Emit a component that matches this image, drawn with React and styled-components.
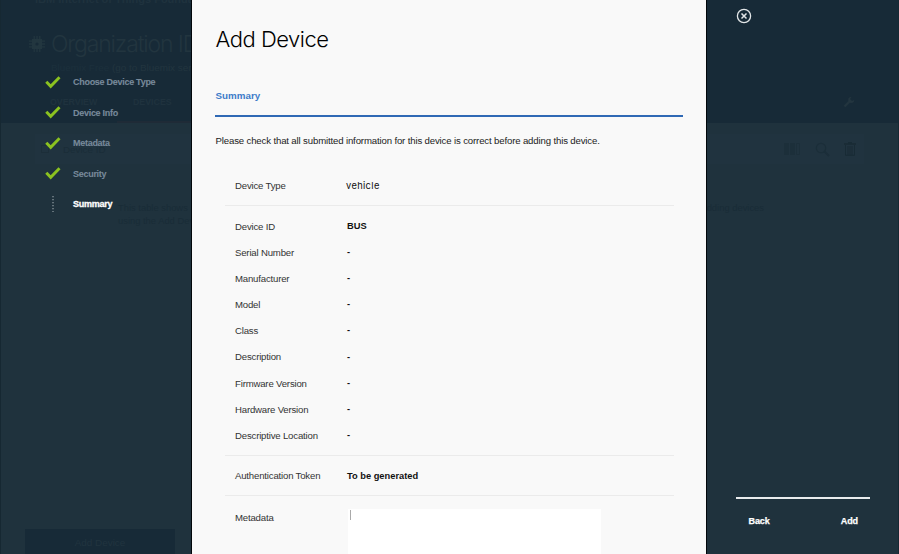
import React from 'react';
import styled, { createGlobalStyle } from 'styled-components';

const Global = createGlobalStyle`
  * { box-sizing: border-box; }
  body { margin: 0; overflow: hidden; background: #1f323d; font-family: "Liberation Sans", Arial, sans-serif; }
  h1, h2, p, ul, dl, dt, dd { margin: 0; padding: 0; font-weight: normal; }
  button { border: 0; padding: 0; background: none; font-family: inherit; cursor: pointer; }
`;

const Stage = styled.div`
  display: grid;
  grid-template: 554px / 899px;
  width: 899px;
  height: 554px;
  overflow: hidden;
`;

/* Dimmed page under the dialog */
const Backdrop = styled.div`
  grid-area: 1 / 1;
  display: grid;
  grid-template-rows: 123px 1fr;
  min-width: 0;
  overflow: hidden;
  white-space: nowrap;
  border-right: 1px solid #172833;
`;
const PageHeader = styled.header`
  background: #172a37;
  color: #203440;
  overflow: hidden;
`;
const Product = styled.div`
  height: 28px;
  padding-left: 35px;
  margin-top: -7px;
  font-size: 11px;
  line-height: 12px;
  font-weight: bold;
  color: #1f323e;
`;
const OrgTitle = styled.div`
  display: flex;
  align-items: center;
  gap: 6px;
  height: 46px;
  padding-left: 29px;
  font: 300 23px Inter, sans-serif;
  letter-spacing: -1.15px;
  color: #22353f;
`;
const Plan = styled.div`
  padding-left: 51px;
  height: 25px;
  font-size: 9.9px;
  line-height: 1px;
  color: #1c303c;
  b { color: #22353f; font-weight: normal; }
`;
const PageTabs = styled.div`
  display: grid;
  grid-template-columns: 67px 1fr auto;
  align-items: center;
  height: 29px;
  padding: 0 43px 10px 50px;
  font-size: 8.8px;
  font-weight: bold;
  color: #1f323e;
  span + span { padding-left: 16px; }
`;
const ActiveTabLine = styled.div`
  width: 74px;
  height: 2px;
  margin-left: 117px;
  background: #1f2b37;
`;
const PageBody = styled.div`
  display: flex;
  flex-direction: column;
  background: #1f323d;
`;
const TableBar = styled.div`
  display: flex;
  align-items: center;
  gap: 14px;
  height: 30px;
  margin: 11px 34px 0 35px;
  padding: 0 8px 0 6px;
  background: #20333f;
  color: #1a2d38;
  font-size: 9.8px;
`;
const Box = styled.span`
  width: 8px;
  height: 8px;
  border: 1px solid #1c2e39;
`;
const Spacer = styled.span`flex: 1;`;
const Empty = styled.div`
  display: flex;
  justify-content: space-between;
  padding: 37px 134px 0 118px;
  color: #192c37;
  font-size: 9.4px;
  line-height: 13px;
`;
const PageAction = styled.div`
  width: 150px;
  height: 25px;
  margin: auto 0 0 25px;
  background: #172a37;
  color: #21343f;
  font-size: 9.9px;
  line-height: 28px;
  text-align: center;
`;

/* Dialog */
const Wizard = styled.div`
  grid-area: 1 / 1;
  z-index: 1;
  display: grid;
  grid-template-columns: 191px 516px 1fr;
  height: 554px;
`;
const Steps = styled.ul`
  list-style: none;
  padding: 66.6px 0 0 45px;
  border-left: 1px solid #162832;
`;
const Step = styled.li`
  display: grid;
  grid-template-columns: 28px 1fr;
  align-items: center;
  height: 30.5px;
  color: ${p => (p.$active ? '#fff' : '#77899a')};
  font-size: 9px;
  font-weight: bold;
  letter-spacing: ${p => (p.$active ? '-0.25px' : '-0.28px')};
  -webkit-text-stroke: ${p => (p.$active ? '0.3px' : '0.1px')};
  margin-left: -1px;
  white-space: nowrap;
  span { padding-top: 1px; }
`;
const Panel = styled.main`
  height: 554px;
  padding: 0 23px;
  border: solid #02070b;
  border-width: 0 1px;
  background: #f9f9f9;
  overflow: hidden;
`;
const Title = styled.h1`
  height: 78px;
  padding: 25px 0 0 0.5px;
  font: 300 22px/28px Inter, sans-serif;
  letter-spacing: -0.5px;
  color: #000;
`;
const Section = styled.h2`
  height: 39px;
  padding: 11px 0 0 0.5px;
  border-bottom: 2px solid #2f69b5;
  color: #3d7cc9;
  font-size: 9.8px;
  line-height: 14px;
  font-weight: bold;
`;
const Intro = styled.p`
  height: 48px;
  padding: 17px 0 0 0.5px;
  color: #222;
  font-size: 9.6px;
  letter-spacing: -0.14px;
  line-height: 14px;
  white-space: nowrap;
`;
const Group = styled.dl`
  margin: 0 9px 0 10px;
  padding: ${p => (p.$first ? '7.6px 0 6.2px 10px' : '7.2px 0 6.3px 10px')};
  border-bottom: 1px solid #ebebeb;
`;
const Row = styled.div`
  display: grid;
  grid-template-columns: 112px 1fr;
  height: 26.15px;
  align-items: center;
`;
const Label = styled.dt`
  color: #333;
  font-size: 9.6px;
  letter-spacing: -0.18px;
`;
const Value = styled.dd`
  color: #111;
  font-size: 9.3px;
  font-weight: bold;
  padding-bottom: 0.5px;
`;
const TypeValue = styled(Value)`
  font: 400 9.3px Inter, sans-serif;
  letter-spacing: 0.35px;
  margin-left: -1px;
`;
const MetaRow = styled.div`
  display: grid;
  grid-template-columns: 113px 253px;
  padding: 13px 0 0 20px;
  height: 60px;
`;
const MetaLabel = styled.div`
  padding-top: 2.4px;
  color: #333;
  font-size: 9.6px;
  letter-spacing: -0.18px;
`;
const Editor = styled.div`
  background: #fff;
  padding: 1px 0 0 2px;
`;
const Caret = styled.div`
  width: 1px;
  height: 10px;
  background: #aaa;
`;
const Side = styled.aside`
  display: flex;
  flex-direction: column;
  justify-content: space-between;
  padding: 8px 29px 26px 28.5px;
`;
const Close = styled.button`
  width: 16px;
  height: 16px;
  line-height: 0;
`;
const Actions = styled.div`
  display: flex;
  justify-content: space-between;
  border-top: 2px solid #e8ebed;
  padding: 15px 12px 0 13px;
`;
const Action = styled.button`
  color: #fff;
  font-size: 9px;
  line-height: 14px;
  font-weight: bold;
  letter-spacing: -0.1px;
  -webkit-text-stroke: 0.25px;
`;

const Check = () => (
  <svg width="16" height="14" viewBox="0 0 16 14">
    <path d="M1.3 6.7 5.7 11.3 14.5 2.2" fill="none" stroke="#8bc220" strokeWidth="2.9" />
  </svg>
);
const Dots = () => (
  <svg width="16" height="17" viewBox="0 0 16 17">
    <path d="M8 1V17" stroke="#aab3b9" strokeWidth="1" strokeDasharray="1.3 1.7" />
  </svg>
);
const Chip = () => (
  <svg width="16" height="16" viewBox="0 0 16 16" fill="#22363f">
    <path fillRule="evenodd" d="M3 3h10v10H3zM8 6.4a1.6 1.6 0 1 0 0 3.2 1.6 1.6 0 0 0 0-3.2z" />
    <path
      d="M5.2 0v3M8 0v3M10.8 0v3M5.2 13v3M8 13v3M10.8 13v3M0 5.2h3M0 8h3M0 10.8h3M13 5.2h3M13 8h3M13 10.8h3"
      stroke="#22363f"
      strokeWidth="1.3"
    />
  </svg>
);
const Wrench = () => (
  <svg width="12" height="12" viewBox="0 0 12 12">
    <path d="m1.5 10.5 5-5" stroke="#23353f" strokeWidth="2.4" />
    <path d="M8.5 1a3 3 0 1 0 2.7 3L9 5 7 3z" fill="#23353f" />
  </svg>
);
const Columns = () => (
  <svg width="17" height="12" viewBox="0 0 17 12" fill="#1c2f3a">
    <path d="M0 0h5v12H0zM6 0h5v12H6z" />
    <path d="M12.5.5h3v11h-3z" fill="none" stroke="#1c2f3a" />
  </svg>
);
const Search = () => (
  <svg width="15" height="15" viewBox="0 0 15 15" fill="none" stroke="#1b2e39">
    <circle cx="6" cy="6" r="4.7" strokeWidth="1.2" />
    <path d="m9.5 9.5 4.5 4.5" strokeWidth="2" />
  </svg>
);
const Trash = () => (
  <svg width="12" height="14" viewBox="0 0 12 14">
    <path d="M0 2h12M4 .7h4" stroke="#182b35" strokeWidth="1.6" />
    <path d="M1.5 3v10.3h9V3M4 4v9M6 4v9M8 4v9" fill="none" stroke="#182b35" />
  </svg>
);

const steps = ['Choose Device Type', 'Device Info', 'Metadata', 'Security'];
const details = [
  ['Device ID', 'BUS'],
  ['Serial Number', '-'],
  ['Manufacturer', '-'],
  ['Model', '-'],
  ['Class', '-'],
  ['Description', '-'],
  ['Firmware Version', '-'],
  ['Hardware Version', '-'],
  ['Descriptive Location', '-'],
];

export default function App() {
  return (
    <>
      <Global />
      <Stage>
        <Backdrop aria-hidden="true">
          <PageHeader>
            <Product>IBM Internet of Things Foundation</Product>
            <OrgTitle><Chip />Organization ID</OrgTitle>
            <Plan>Bluemix Free <b>(go to Bluemix ser</b></Plan>
            <PageTabs><span>OVERVIEW</span><span>DEVICES</span><Wrench /></PageTabs>
            <ActiveTabLine />
          </PageHeader>
          <PageBody>
            <TableBar><Box /><span>Device ID</span><Spacer /><Columns /><Search /><Trash /></TableBar>
            <Empty>
              <div>This table shows a<br />using the Add Dev</div>
              <div>dding devices</div>
            </Empty>
            <PageAction>Add Device</PageAction>
          </PageBody>
        </Backdrop>
        <Wizard role="dialog">
          <Steps>
            {steps.map(s => <Step key={s}><Check /><span>{s}</span></Step>)}
            <Step $active><Dots /><span>Summary</span></Step>
          </Steps>
          <Panel>
            <Title>Add Device</Title>
            <Section>Summary</Section>
            <Intro>Please check that all submitted information for this device is correct before adding this device.</Intro>
            <Group $first>
              <Row><Label>Device Type</Label><TypeValue>vehicle</TypeValue></Row>
            </Group>
            <Group>
              {details.map(([k, v]) => <Row key={k}><Label>{k}</Label><Value>{v}</Value></Row>)}
            </Group>
            <Group>
              <Row><Label>Authentication Token</Label><Value>To be generated</Value></Row>
            </Group>
            <MetaRow>
              <MetaLabel>Metadata</MetaLabel>
              <Editor><Caret /></Editor>
            </MetaRow>
          </Panel>
          <Side>
            <Close aria-label="Close">
              <svg width="16" height="16" viewBox="0 0 16 16" fill="none" stroke="#e3e6e8">
                <circle cx="8" cy="8" r="6.6" strokeWidth="1.3" />
                <path d="m5.5 5.5 5 5M10.5 5.5l-5 5" strokeWidth="1.5" />
              </svg>
            </Close>
            <Actions><Action>Back</Action><Action>Add</Action></Actions>
          </Side>
        </Wizard>
      </Stage>
    </>
  );
}
